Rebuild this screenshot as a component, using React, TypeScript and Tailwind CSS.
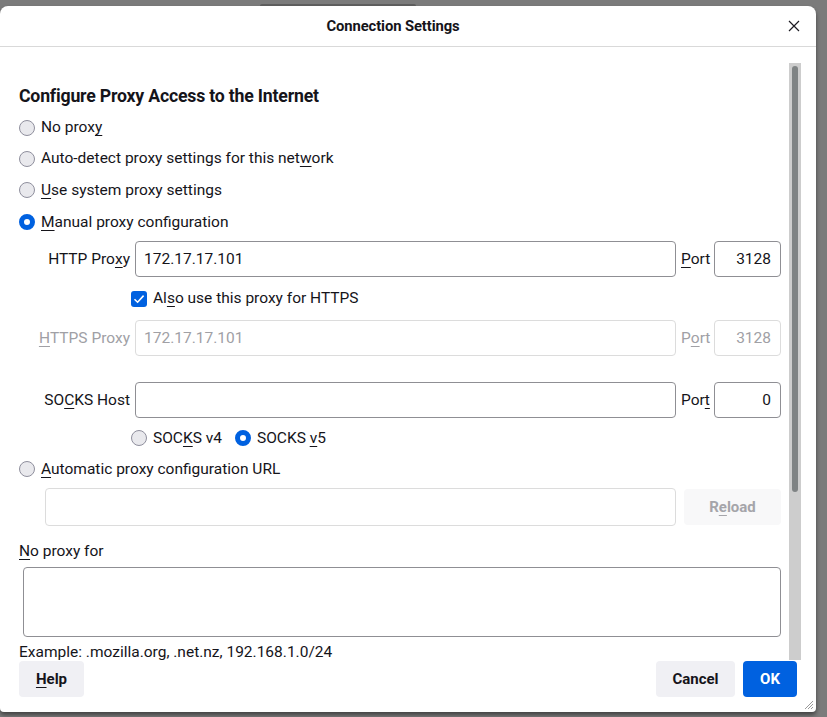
import React from 'react';

const U: React.FC<{ children: React.ReactNode }> = ({ children }) => (
  <span className="underline decoration-1 underline-offset-[3px]">{children}</span>
);

const Radio: React.FC<{ checked?: boolean }> = ({ checked }) =>
  checked ? (
    <span className="block w-4 h-4 shrink-0 rounded-full border-[5px] border-[#0061e0] bg-white" />
  ) : (
    <span className="block w-4 h-4 shrink-0 rounded-full border border-[#8f8f9d] bg-[#e9e9ed]" />
  );

const Field: React.FC<{ value?: string; disabled?: boolean; className?: string; right?: boolean }> = ({
  value,
  disabled,
  className = '',
  right,
}) => (
  <div
    className={`flex items-center rounded-[4px] border px-2 ${right ? 'justify-end' : ''} ${
      disabled ? 'border-[#dcdcdc] text-[#a0a0a5]' : 'border-[#8f8f94] text-[#15141a]'
    } ${className}`}
  >
    <span className="pt-px">{value}</span>
  </div>
);

const ProxyRow: React.FC<{
  label: React.ReactNode;
  value?: string;
  port: string;
  portLabel: React.ReactNode;
  disabled?: boolean;
}> = ({ label, value, port, portLabel, disabled }) => (
  <div className={`flex h-9 items-stretch ${disabled ? 'text-[#a0a0a5]' : ''}`}>
    <div className="w-[111px] shrink-0 flex items-center justify-end pt-px">{label}</div>
    <Field value={value} disabled={disabled} className="ml-[5px] flex-1 pl-[8px]" />
    <div className="ml-[5px] w-[29px] flex items-center pt-px">{portLabel}</div>
    <Field value={port} disabled={disabled} right className="ml-1 w-[67px] pr-[9px]" />
  </div>
);

const RadioRow: React.FC<{ checked?: boolean; tall?: boolean; children: React.ReactNode }> = ({
  checked,
  tall,
  children,
}) => (
  <div className={`flex items-center gap-[6px] ${tall ? 'h-8' : 'h-[31px]'}`}>
    <Radio checked={checked} />
    <span className="pt-px">{children}</span>
  </div>
);

const App: React.FC = () => {
  return (
    <div
      className="w-[827px] h-[717px] overflow-hidden bg-[#7b7b7b] text-[15.5px] text-[#15141a]"
      style={{ fontFamily: 'Roboto, "Noto Sans", sans-serif' }}
    >
      {/* window behind, only its top edge shows */}
      <div className="h-[6px] flex">
        <div className="ml-[260px] mt-[4px] w-[156px] h-[2px] rounded-t-[3px] bg-[#5f5f5f]" />
      </div>

      <div className="w-[816px] h-[706px] bg-white rounded-t-[8px] rounded-b-[4px] flex flex-col shadow-[0_3px_4px_rgba(0,0,0,0.45)] relative">
        {/* title bar */}
        <div className="h-[41px] shrink-0 flex items-center justify-center pr-[30px] border-b border-[#d9d9d9] relative">
          <span className="text-[14.8px] font-bold tracking-[-0.1px]">Connection Settings</span>
          <svg className="absolute right-[16px] top-[14px]" width="12" height="12" viewBox="0 0 12 12">
            <path d="M1 1L11 11M11 1L1 11" stroke="#1c1b22" strokeWidth="1.2" />
          </svg>
        </div>

        {/* scrollable content */}
        <div className="h-[613px] shrink-0 flex">
          <div className="flex-1 overflow-hidden pl-[19px] pr-[8px] pt-[37px]">
            <h1 className="h-6 flex items-center pt-px text-[17.7px] font-bold tracking-[-0.2px]">
              Configure Proxy Access to the Internet
            </h1>
            <div className="mt-1">
              <RadioRow>
                No prox<U>y</U>
              </RadioRow>
              <RadioRow>
                Auto-detect proxy settings for this net<U>w</U>ork
              </RadioRow>
              <RadioRow tall>
                <U>U</U>se system proxy settings
              </RadioRow>
              <RadioRow checked tall>
                <U>M</U>anual proxy configuration
              </RadioRow>
            </div>

            <div className="mt-[3px]">
              <ProxyRow
                label={
                  <>
                    HTTP Pro<U>x</U>y
                  </>
                }
                value="172.17.17.101"
                portLabel={
                  <>
                    <U>P</U>ort
                  </>
                }
                port="3128"
              />
              <div className="h-[43px] flex items-center pl-[112px] gap-[6px]">
                <span className="w-4 h-4 rounded-[3px] bg-[#0061e0] flex items-center justify-center">
                  <svg width="12" height="12" viewBox="0 0 12 12">
                    <path d="M1.5 6.2L4.6 9.2L10.6 2.6" stroke="white" strokeWidth="1.6" fill="none" />
                  </svg>
                </span>
                <span className="pt-px">
                  Al<U>s</U>o use this proxy for HTTPS
                </span>
              </div>
              <ProxyRow
                disabled
                label={
                  <>
                    <U>H</U>TTPS Proxy
                  </>
                }
                value="172.17.17.101"
                portLabel={
                  <>
                    P<U>o</U>rt
                  </>
                }
                port="3128"
              />
              <div className="mt-[26px]">
                <ProxyRow
                  label={
                    <>
                      SO<U>C</U>KS Host
                    </>
                  }
                  portLabel={
                    <>
                      Por<U>t</U>
                    </>
                  }
                  port="0"
                />
              </div>
              <div className="h-10 flex items-center pl-[112px]">
                <Radio />
                <span className="ml-[6px] pt-px">
                  SOC<U>K</U>S v4
                </span>
                <span className="ml-[13px]">
                  <Radio checked />
                </span>
                <span className="ml-[6px] pt-px">
                  SOCKS <U>v</U>5
                </span>
              </div>
            </div>

            <div className="h-[22px] flex items-center gap-[6px]">
              <Radio />
              <span className="pt-px">
                <U>A</U>utomatic proxy configuration URL
              </span>
            </div>
            <div className="mt-2 flex items-start pl-[26px]">
              <Field disabled className="flex-1 h-[38px]" />
              <div className="ml-2 mt-px w-[97px] h-9 rounded-[4px] bg-[#f8f8f9] text-[#a5a5aa] text-[15px] font-bold flex items-center justify-center">
                R<U>e</U>load
              </div>
            </div>

            <div className="mt-[15px] h-5 flex items-center pt-px">
              <span>
                <U>N</U>o proxy for
              </span>
            </div>
            <div className="mt-[6px] ml-1 h-[70px] rounded-[4px] border border-[#8f8f94]" />
            <div className="mt-[5px] h-5 flex items-center pt-px">Example: .mozilla.org, .net.nz, 192.168.1.0/24</div>
          </div>

          {/* scrollbar */}
          <div className="mt-4 w-3 h-[597px] shrink-0 bg-[#cdcdcd] flex justify-center pt-[3px]">
            <div className="w-[6px] h-[426px] rounded-[3px] bg-[#7f8384]" />
          </div>
          <div className="w-[15px] shrink-0" />
        </div>

        {/* footer */}
        <div className="flex-1 flex items-start pt-px pl-[19px] pr-[19px] text-[15px]">
          <div className="h-9 w-[65px] rounded-[4px] bg-[#f0f0f4] font-bold flex items-center justify-center">
            <U>H</U>elp
          </div>
          <div className="flex-1" />
          <div className="h-9 w-[79px] rounded-[4px] bg-[#f0f0f4] font-bold flex items-center justify-center">
            Cancel
          </div>
          <div className="ml-2 h-9 w-[54px] rounded-[4px] bg-[#0061e0] text-white font-bold flex items-center justify-center">
            OK
          </div>
        </div>

        {/* resize grip */}
        <svg className="absolute right-[2px] bottom-[2px]" width="10" height="10" viewBox="0 0 10 10">
          <path d="M9 1L1 9M9 4L4 9M9 7L7 9" stroke="#9a9a9a" strokeWidth="1" />
        </svg>
      </div>
    </div>
  );
};

export default App;
